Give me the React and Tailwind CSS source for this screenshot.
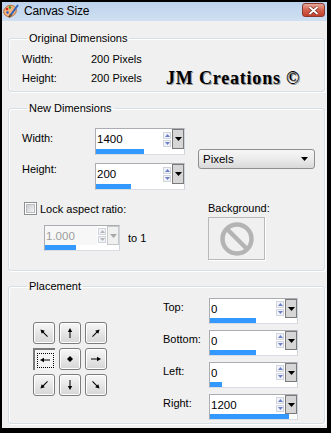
import clsx from 'clsx'

const ARROWS = [
  { rot: -45 }, { rot: 0 }, { rot: 45 },
  { rot: -90, selected: true }, { dot: true }, { rot: 90 },
  { rot: -135 }, { rot: 180 }, { rot: 135 },
]

function Group({ title, className, children }) {
  return (
    <fieldset className={clsx('rounded-[3px] border border-[#d5dfe5] pl-[13px] shadow-[inset_1px_1px_0_#fff,1px_1px_0_#fff]', className)}>
      <legend className="ml-[5px] px-[2px] leading-[14px]">{title}</legend>
      {children}
    </fieldset>
  )
}

function Tri({ down, color }) {
  return (
    <svg width="5" height="3" viewBox="0 0 5 3">
      <polygon points={down ? '0,0 5,0 2.5,3' : '0,3 5,3 2.5,0'} fill={color} />
    </svg>
  )
}

function NumField({ w, value, bar, row = 'h-[20px]', disabled }) {
  const tri = disabled ? '#b5b5b5' : '#6a7fc8'
  return (
    <div className={clsx('flex flex-col border border-[#abadb3] border-b-[#d9dde3] border-r-[#cfd3da] bg-white', w)}>
      <div className={clsx('flex', row)}>
        <span className={clsx('flex flex-1 items-center pl-[1px] text-[11.5px]', disabled ? 'bg-[#f7f7f7] text-[#9d9d9d]' : 'text-black')}>{value}</span>
        <div className="flex w-[10px] flex-col justify-center gap-[1px] bg-white px-[1px]">
          <div className="flex h-[7px] items-center justify-center border border-[#d0d4dc] bg-[#f1f3f8]"><Tri color={tri} /></div>
          <div className="flex h-[7px] items-center justify-center border border-[#d0d4dc] bg-[#f1f3f8]"><Tri down color={tri} /></div>
        </div>
        <div className={clsx('flex w-[12px] items-center justify-center border', disabled ? 'border-[#c8c8c8] bg-[#f0f0f0]' : 'border-[#7a7a7a] bg-[#d6d6d6]')}>
          <svg width="7" height="4" viewBox="0 0 7 4"><polygon points="0,0 7,0 3.5,4" fill={disabled ? '#a8a8a8' : '#000'} /></svg>
        </div>
      </div>
      <div className="h-[5px] bg-white">
        <div className={clsx('h-full bg-[#3399ff]', bar)} />
      </div>
    </div>
  )
}

function Arrow({ rot }) {
  return (
    <svg width="12" height="12" viewBox="0 0 12 12">
      <g transform={`rotate(${rot} 6 6)`}>
        <line x1="6" y1="11" x2="6" y2="4" stroke="#000" strokeWidth="1" />
        <polygon points="6,1 3.8,5 8.2,5" fill="#000" />
      </g>
    </svg>
  )
}

function PlaceButton({ rot, dot, selected }) {
  const icon = dot ? (
    <svg width="12" height="12" viewBox="0 0 12 12"><polygon points="6,3 9,6 6,9 3,6" fill="#000" /></svg>
  ) : (
    <Arrow rot={rot} />
  )
  if (selected) {
    return (
      <div className="flex h-[22px] w-[22px] items-center justify-center border-l-[2px] border-t-[2px] border-[#7a7a7a] bg-[#f5f5f5]">
        <div className="flex h-[15px] w-[17px] items-center justify-center border border-dotted border-black">{icon}</div>
      </div>
    )
  }
  return (
    <div className="flex h-[22px] w-[22px] items-center justify-center rounded-[3px] border border-[#7c7c7c] bg-linear-to-b from-[#f7f7f7] to-[#d6d6d6] shadow-[inset_0_0_0_1px_#fff]">
      {icon}
    </div>
  )
}

function TitleBar() {
  return (
    <div className="flex h-[19px] items-start bg-linear-to-b from-[#bcd2ec] to-[#d0e0f2]">
      <svg className="ml-[1px] mt-[1px]" width="16" height="16" viewBox="0 0 16 16">
        <ellipse cx="7" cy="8" rx="6.5" ry="5.5" fill="#f2b37a" stroke="#b0622a" strokeWidth="0.8" transform="rotate(-25 7 8)" />
        <circle cx="4" cy="6" r="1.3" fill="#d3261e" />
        <circle cx="7" cy="4.5" r="1.2" fill="#2f9b34" />
        <circle cx="4.5" cy="9.5" r="1.2" fill="#2a5fd0" />
        <line x1="15" y1="2" x2="7" y2="13" stroke="#2c63c4" strokeWidth="2" />
        <line x1="8" y1="11.5" x2="6" y2="14.5" stroke="#6b4a2a" strokeWidth="2" />
      </svg>
      <span className="ml-[5px] mt-[2px] text-[12px] leading-[15px] tracking-[-0.2px] text-black">Canvas Size</span>
      <div className="ml-auto mr-[2px] mt-[1px] flex h-[14px] w-[23px] items-center justify-center rounded-[3px] border border-[#8b3a2e] bg-linear-to-b from-[#e6a698] via-[#d3624f] to-[#c4402a]">
        <svg width="11" height="9" viewBox="0 0 11 9">
          <path d="M1.5 1 L9.5 8 M9.5 1 L1.5 8" stroke="#6e2a20" strokeWidth="3.2" />
          <path d="M1.5 1 L9.5 8 M9.5 1 L1.5 8" stroke="#fff" strokeWidth="1.8" />
        </svg>
      </div>
    </div>
  )
}

export default function App() {
  return (
    <div className="h-[433px] w-[331px] bg-black pb-[5px] pl-[2px] pr-[4px] pt-[2px] font-['Liberation_Sans',Arial,sans-serif] text-[11px] leading-[14px] text-black">
      <div className="flex h-full flex-col bg-[#f0f0f0]">
        <TitleBar />
        <div className="flex flex-1 flex-col pl-[6px] pr-[2px] pt-[10px]">
          {/* Original */}
          <Group title="Original Dimensions" className="pb-[6px] pt-[7px]">
            <div className="flex h-[14px]">
              <span className="w-[69px]">Width:</span>
              <span>200 Pixels</span>
            </div>
            <div className="mt-[5px] flex h-[14px] items-center">
              <span className="w-[69px]">Height:</span>
              <span className="w-[75px]">200 Pixels</span>
              <span className="font-['Liberation_Serif',serif] text-[18px] font-bold leading-[14px] tracking-[0.8px] [text-shadow:1px_1px_0_#9a9a9a]">JM Creations ©</span>
            </div>
          </Group>

          {/* New */}
          <Group title="New Dimensions" className="mt-[9px] pb-[10px] pt-[13px]">
            <div className="flex items-center">
              <div className="flex flex-col gap-[8px]">
                <div className="flex">
                  <span className="mt-[3px] w-[73px]">Width:</span>
                  <NumField w="w-[90px]" value="1400" bar="w-[48px]" />
                </div>
                <div className="flex">
                  <span className="-mt-[1px] w-[73px]">Height:</span>
                  <NumField w="w-[90px]" value="200" bar="w-[35px]" />
                </div>
              </div>
              <div className="ml-[13px] flex h-[20px] w-[117px] items-center justify-between rounded-[3px] border border-[#8e8f8f] bg-linear-to-b from-[#f6f6f6] via-[#ebebeb] to-[#d9d9d9] pl-[4px] pr-[6px] text-[11.5px]">
                <span>Pixels</span>
                <svg width="7" height="4" viewBox="0 0 7 4"><polygon points="0,0 7,0 3.5,4" fill="#000" /></svg>
              </div>
            </div>
            <div className="mt-[12px] flex">
              <div className="w-[186px]">
                <div className="ml-[2px] flex h-[13px] items-center gap-[3px]">
                  <div className="flex h-[13px] w-[13px] items-center justify-center border border-[#8e8f8f] bg-white">
                    <div className="h-[9px] w-[9px] border border-[#b9bcc1] bg-linear-to-br from-[#c9ccd2] to-[#f4f4f4]" />
                  </div>
                  <span>Lock aspect ratio:</span>
                </div>
                <div className="ml-[22px] mt-[10px] flex items-center">
                  <NumField w="w-[76px]" value="1.000" bar="w-[31px]" row="h-[19px]" disabled />
                  <span className="ml-[8px]">to 1</span>
                </div>
              </div>
              <div>
                <div className="h-[13px] leading-[13px]">Background:</div>
                <div className="mt-[2px] flex h-[43px] w-[57px] items-center justify-center border border-[#b9b9b9] bg-[#f0f0f0] shadow-[1px_1px_0_#fff]">
                  <svg width="36" height="36" viewBox="0 0 36 36">
                    <circle cx="18" cy="18" r="14.5" fill="none" stroke="#b4b4b4" strokeWidth="4.5" />
                    <line x1="8" y1="8" x2="28" y2="28" stroke="#b4b4b4" strokeWidth="4.5" />
                  </svg>
                </div>
              </div>
            </div>
          </Group>

          {/* Placement */}
          <Group title="Placement" className="mt-[8px] pb-[3px] pt-[5px]">
            <div className="flex items-center">
              <div className="ml-[11px] grid grid-cols-3 gap-[4px]">
                {ARROWS.map((a, i) => (
                  <PlaceButton key={i} {...a} />
                ))}
              </div>
              <div className="ml-[56px] flex flex-col gap-[6px]">
                {[
                  ['Top:', '0', 'w-[46px]'],
                  ['Bottom:', '0', 'w-[46px]'],
                  ['Left:', '0', 'w-[12px]'],
                  ['Right:', '1200', 'w-[79px]'],
                ].map(([label, value, bar]) => (
                  <div key={label} className="flex">
                    <span className="mt-[2px] w-[46px]">{label}</span>
                    <NumField w="w-[89px]" value={value} bar={bar} row="h-[19px]" />
                  </div>
                ))}
              </div>
            </div>
          </Group>
        </div>
      </div>
    </div>
  )
}
